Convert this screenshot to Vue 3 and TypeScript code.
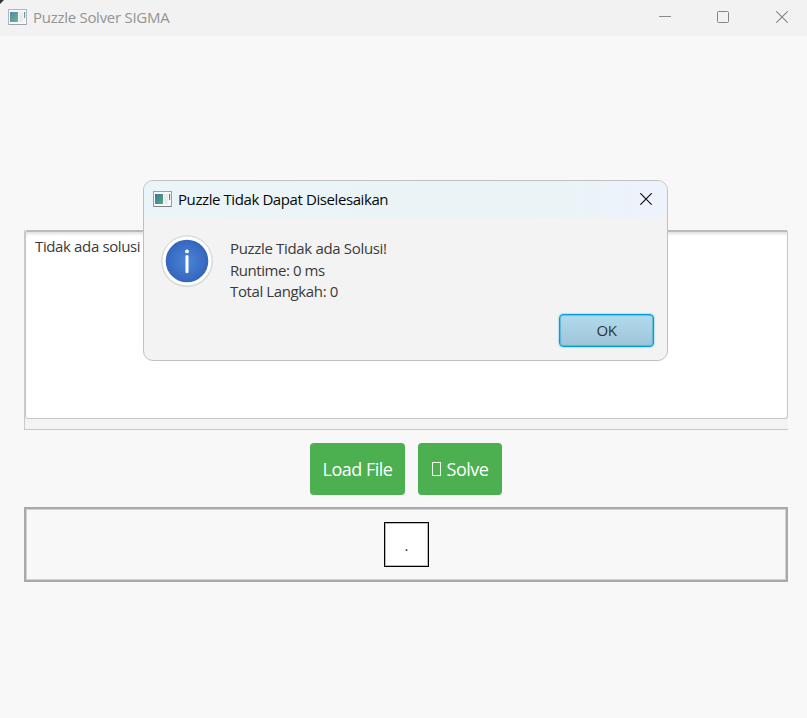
<script setup lang="ts">
import { ref } from 'vue'

const output = ref<string>('Tidak ada solusi')
const messages: string[] = ['Puzzle Tidak ada Solusi!', 'Runtime: 0 ms', 'Total Langkah: 0']
const board: string[][] = [['.']]
</script>

<template>
  <div class="window">
    <svg class="corner" width="4" height="4" viewBox="0 0 4 4"><path d="M0 0H4L0 4Z" fill="#333" /></svg>
    <header class="titlebar">
      <svg class="app-icon faded" width="19" height="16" viewBox="0 0 19 16">
        <defs>
          <linearGradient id="pane" x1="0" y1="0" x2="1" y2="1">
            <stop offset="0" stop-color="#41729e" /><stop offset="1" stop-color="#55ad7b" />
          </linearGradient>
        </defs>
        <rect x=".5" y=".5" width="18" height="15" fill="#f7f8f9" stroke="#a9abb5" />
        <path d="M1 15.5H18" stroke="#8f929b" />
        <rect x="2" y="3" width="8" height="10" fill="url(#pane)" />
        <rect x="11" y="3" width="4" height="10" fill="#e9ebec" />
        <rect x="16" y="3" width="1.2" height="6" fill="url(#pane)" />
      </svg>
      <span class="title">Puzzle Solver SIGMA</span>
      <div class="controls">
        <svg width="12" height="12" viewBox="0 0 12 12"><path d="M0 5.5H12" stroke="#8b8b8b" /></svg>
        <svg width="12" height="12" viewBox="0 0 12 12"><rect x=".5" y=".5" width="11" height="11" rx="1" fill="none" stroke="#858585" /></svg>
        <svg class="close" width="12" height="12" viewBox="0 0 12 12"><path d="M.3 .3L11.7 11.7M11.7 .3L.3 11.7" stroke="#858585" stroke-width="1.1" /></svg>
      </div>
    </header>

    <main class="content">
      <section class="output">
        <div class="output-text"><span class="result">{{ output }}</span></div>
        <div class="scroll-track"></div>
      </section>
      <div class="actions">
        <button class="action load"><span>Load File</span></button>
        <button class="action solve"><i class="missing-glyph"></i><span>Solve</span></button>
      </div>
      <section class="board">
        <div v-for="(row, r) in board" :key="r" class="row">
          <div v-for="(cell, c) in row" :key="c" class="cell">{{ cell }}</div>
        </div>
      </section>
    </main>

    <div class="dialog" role="dialog">
      <header class="dialog-header">
        <svg class="app-icon" width="19" height="16" viewBox="0 0 19 16">
          <rect x=".5" y=".5" width="18" height="15" fill="#f7f8f9" stroke="#9c9fa9" />
          <path d="M1 15.5H18" stroke="#80838d" />
          <rect x="2" y="3" width="8" height="10" fill="url(#pane)" />
          <rect x="11" y="3" width="4" height="10" fill="#e9ebec" />
          <rect x="16" y="3" width="1.2" height="6" fill="url(#pane)" />
        </svg>
        <span class="dialog-title">Puzzle Tidak Dapat Diselesaikan</span>
        <svg class="dialog-close" width="12" height="12" viewBox="0 0 12 12"><path d="M.3 .3L11.7 11.7M11.7 .3L.3 11.7" stroke="#111" stroke-width="1.2" /></svg>
      </header>
      <div class="dialog-body">
        <svg class="info" width="54" height="54" viewBox="0 0 54 54">
          <defs>
            <radialGradient id="info-fill">
              <stop offset="0" stop-color="#4a86d8" /><stop offset="1" stop-color="#3565bd" />
            </radialGradient>
          </defs>
          <circle cx="27" cy="27.3" r="26" fill="#dedede" />
          <circle cx="27" cy="27" r="25" fill="#fff" stroke="#d2d2d2" stroke-width=".8" />
          <circle cx="27" cy="27" r="21.3" fill="url(#info-fill)" />
          <circle cx="27" cy="17.4" r="1.9" fill="#fff" />
          <rect x="25.5" y="21.3" width="3" height="17.7" rx=".8" fill="#fff" />
        </svg>
        <div class="messages">
          <p v-for="(line, i) in messages" :key="i"><span :class="'line-' + i">{{ line }}</span></p>
        </div>
      </div>
      <footer class="dialog-footer"><button class="ok"><span>OK</span></button></footer>
    </div>
  </div>
</template>

<style>
body { margin: 0; background: #f8f8f8; }
</style>

<style scoped>
.window {
  position: relative;
  width: 807px;
  height: 718px;
  overflow: hidden;
  background: #f8f8f8;
  color: #3a3a3a;
  font: 400 15px "Open Sans", "Noto Sans", sans-serif;
}
.window * { box-sizing: border-box; }
svg { display: block; flex: none; }
button { font: inherit; }
.corner { position: absolute; left: 0; top: 0; }
.titlebar {
  display: flex;
  align-items: center;
  height: 36px;
  padding: 0 19px 2px 8px;
  background: #f2f2f2;
  color: #949494;
}
.faded { opacity: .85; }
.title { margin-left: 6px; letter-spacing: -.28px; white-space: nowrap; }
.controls { display: flex; gap: 46px; margin-left: auto; }
.close { margin-left: 1px; }
.content { display: flex; flex-direction: column; padding: 194px 19px 0 24px; }
.output {
  display: flex;
  flex-direction: column;
  height: 200px;
  border-left: 1px solid #c8c8c8;
  border-bottom: 1px solid #c8c8c8;
  background: #f3f3f3;
}
.output-text {
  height: 189px;
  padding: 4px 9px;
  border: 1px solid #c8c8c8;
  border-top: 2px solid #bababa;
  border-radius: 3px 2px 3px 3px;
  background: #fff;
  box-shadow: inset 0 3px 3px -1px #e1e1e1;
  line-height: 20px;
}
.result { letter-spacing: -.37px; }
.scroll-track { flex: 1; }
.actions { display: flex; justify-content: center; gap: 13px; margin-top: 13px; }
.action {
  display: flex;
  align-items: center;
  justify-content: center;
  height: 52px;
  padding: 0 0 1px;
  border: 0;
  border-radius: 4px;
  background: #4caf50;
  color: #fff;
  font-size: 18px;
}
.load { width: 95px; letter-spacing: -.5px; }
.solve { width: 84px; letter-spacing: -.5px; }
.missing-glyph { width: 9px; height: 14px; margin-right: 6px; border: 1px solid #eef8ed; }
.board {
  display: flex;
  align-items: center;
  justify-content: center;
  height: 75px;
  margin-top: 12px;
  border: 2px solid #a9a9a9;
  box-shadow: inset 0 0 0 1px #d3d3d3;
}
.row { display: flex; }
.cell {
  display: flex;
  align-items: center;
  justify-content: center;
  width: 45px;
  height: 45px;
  padding-left: 1px;
  border: 1px solid #000;
  background: #fff;
  box-shadow: inset 0 0 0 1px #b9b9b9;
  color: #4d2929;
}
.dialog {
  position: absolute;
  left: 143px;
  top: 180px;
  display: flex;
  flex-direction: column;
  width: 525px;
  height: 181px;
  overflow: hidden;
  border: 1px solid #bfc0c1;
  border-radius: 10px;
  background: #f3f3f3;
}
.dialog-header {
  display: flex;
  flex: none;
  align-items: center;
  height: 37px;
  padding: 0 15px 1px 9px;
  background: linear-gradient(90deg, #ebf4f8 0%, #eaf4f7 80%, #edf2fb 95%);
  color: #080808;
}
.dialog-title { margin-left: 6px; letter-spacing: -.41px; white-space: nowrap; }
.dialog-close { margin-left: auto; }
.dialog-body { display: flex; flex: none; height: 96px; padding: 16px 0 0 16px; }
.messages { margin: 4px 0 0 16px; }
.messages p { height: 21.5px; margin: 0; line-height: 21.5px; white-space: nowrap; }
.messages span { letter-spacing: -.33px; }
.messages .line-1 { letter-spacing: -.45px; }
.messages .line-2 { letter-spacing: -.38px; }
.dialog-footer { display: flex; justify-content: flex-end; padding-right: 13px; }
.ok {
  width: 95px;
  height: 33px;
  padding: 0 0 1px;
  border: 1px solid #039ed3;
  border-radius: 4px;
  background: linear-gradient(#b1dbec, #9fc4d9);
  box-shadow: 0 0 1px 1px #bce2ef, inset 0 0 1px .5px #1fa8d6;
  color: #333;
  letter-spacing: -.5px;
}
</style>
